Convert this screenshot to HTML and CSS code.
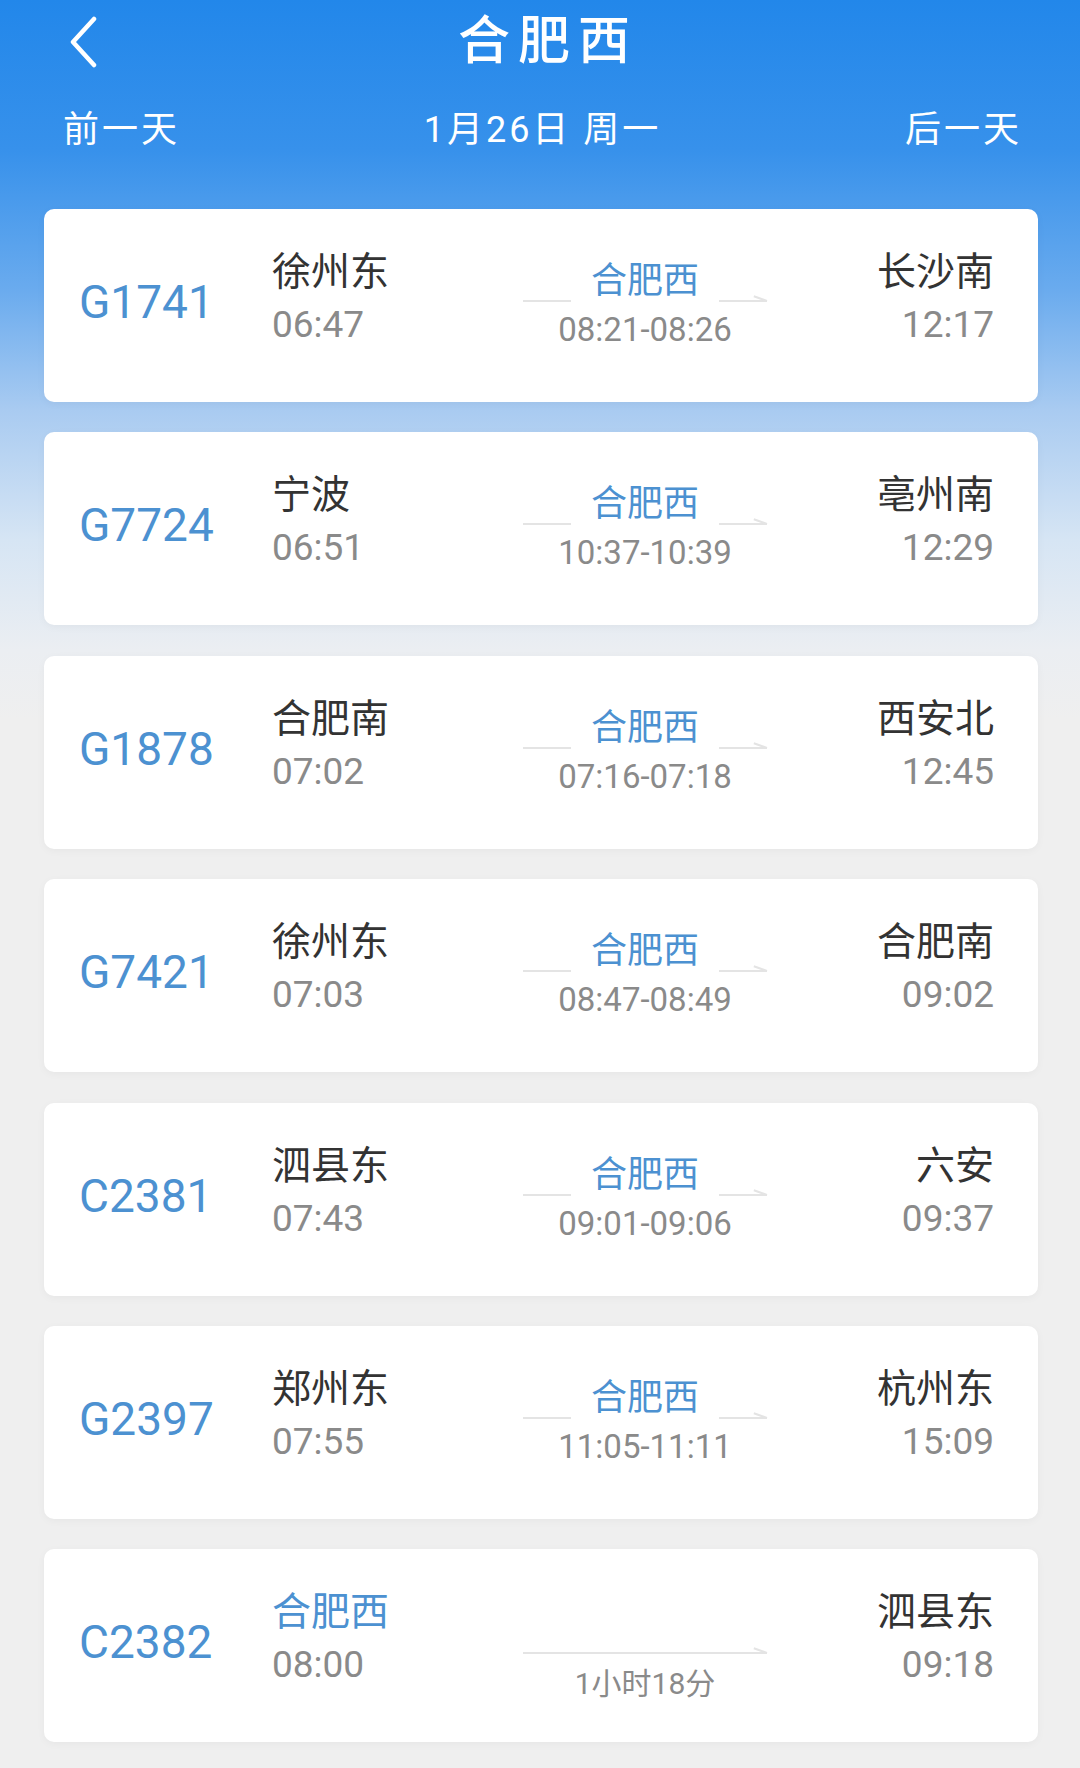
FILE: index.html
```html
<!DOCTYPE html>
<html lang="zh-CN">
  <head>
    <meta charset="UTF-8" />
    <meta name="viewport" content="width=device-width, initial-scale=1.0" />
    <title>合肥西</title>
    <link rel="stylesheet" href="styles.css">
  </head>
  <body>
    <header class="header">
      <div class="topbar">
        <a class="back" href="#">
          <svg viewBox="0 0 30 52" width="30" height="52">
            <path d="M26 3 L5 26 L26 49" fill="none" stroke="#fff" stroke-width="4.5" stroke-linecap="round" stroke-linejoin="round" />
          </svg>
        </a>
        <h1 class="title">合肥西</h1>
        <span></span>
      </div>
      <div class="daybar">
        <a href="#" class="day-link">前一天</a>
        <span class="day-current">1月26日 周一</span>
        <a href="#" class="day-link">后一天</a>
      </div>
    </header>

    <main class="list">
      <div class="card">
        <div class="train-no">G1741</div>
        <div class="stop">
          <span class="stop-name">徐州东</span>
          <span class="stop-time">06:47</span>
        </div>
        <div class="via">
          <div class="via-top">
            <span class="line"></span>
            <span class="via-name">合肥西</span>
            <span class="line arrow"></span>
          </div>
          <span class="via-time">08:21-08:26</span>
        </div>
        <div class="stop end">
          <span class="stop-name">长沙南</span>
          <span class="stop-time">12:17</span>
        </div>
      </div>

      <div class="card">
        <div class="train-no">G7724</div>
        <div class="stop">
          <span class="stop-name">宁波</span>
          <span class="stop-time">06:51</span>
        </div>
        <div class="via">
          <div class="via-top">
            <span class="line"></span>
            <span class="via-name">合肥西</span>
            <span class="line arrow"></span>
          </div>
          <span class="via-time">10:37-10:39</span>
        </div>
        <div class="stop end">
          <span class="stop-name">亳州南</span>
          <span class="stop-time">12:29</span>
        </div>
      </div>

      <div class="card">
        <div class="train-no">G1878</div>
        <div class="stop">
          <span class="stop-name">合肥南</span>
          <span class="stop-time">07:02</span>
        </div>
        <div class="via">
          <div class="via-top">
            <span class="line"></span>
            <span class="via-name">合肥西</span>
            <span class="line arrow"></span>
          </div>
          <span class="via-time">07:16-07:18</span>
        </div>
        <div class="stop end">
          <span class="stop-name">西安北</span>
          <span class="stop-time">12:45</span>
        </div>
      </div>

      <div class="card">
        <div class="train-no">G7421</div>
        <div class="stop">
          <span class="stop-name">徐州东</span>
          <span class="stop-time">07:03</span>
        </div>
        <div class="via">
          <div class="via-top">
            <span class="line"></span>
            <span class="via-name">合肥西</span>
            <span class="line arrow"></span>
          </div>
          <span class="via-time">08:47-08:49</span>
        </div>
        <div class="stop end">
          <span class="stop-name">合肥南</span>
          <span class="stop-time">09:02</span>
        </div>
      </div>

      <div class="card">
        <div class="train-no">C2381</div>
        <div class="stop">
          <span class="stop-name">泗县东</span>
          <span class="stop-time">07:43</span>
        </div>
        <div class="via">
          <div class="via-top">
            <span class="line"></span>
            <span class="via-name">合肥西</span>
            <span class="line arrow"></span>
          </div>
          <span class="via-time">09:01-09:06</span>
        </div>
        <div class="stop end">
          <span class="stop-name">六安</span>
          <span class="stop-time">09:37</span>
        </div>
      </div>

      <div class="card">
        <div class="train-no">G2397</div>
        <div class="stop">
          <span class="stop-name">郑州东</span>
          <span class="stop-time">07:55</span>
        </div>
        <div class="via">
          <div class="via-top">
            <span class="line"></span>
            <span class="via-name">合肥西</span>
            <span class="line arrow"></span>
          </div>
          <span class="via-time">11:05-11:11</span>
        </div>
        <div class="stop end">
          <span class="stop-name">杭州东</span>
          <span class="stop-time">15:09</span>
        </div>
      </div>

      <div class="card">
        <div class="train-no">C2382</div>
        <div class="stop">
          <span class="stop-name current">合肥西</span>
          <span class="stop-time">08:00</span>
        </div>
        <div class="via direct">
          <span class="line arrow"></span>
          <span class="duration">1小时18分</span>
        </div>
        <div class="stop end">
          <span class="stop-name">泗县东</span>
          <span class="stop-time">09:18</span>
        </div>
      </div>
    </main>
  </body>
</html>
```

FILE: styles.css
```css
body {
  margin: 0;
  min-height: 1768px;
  font-family: Roboto, "Noto Sans CJK SC", sans-serif;
  background: linear-gradient(
      180deg,
      #2287ea 0,
      #3791eb 150px,
      #6aabee 290px,
      #a9cbf1 410px,
      #d6e5f4 540px,
      #ebeef2 650px,
      #efefef 720px
    )
    no-repeat;
  background-size: 100% 720px;
  background-color: #efefef;
}

a {
  color: inherit;
  text-decoration: none;
}

.topbar {
  display: grid;
  grid-template-columns: 1fr auto 1fr;
  align-items: center;
  height: 78px;
  padding: 0 60px 0 68px;
}

.back {
  display: flex;
  width: 30px;
  margin-top: 6px;
}

.title {
  margin: -5px 0 0;
  padding-left: 8px;
  font-size: 52px;
  font-weight: 500;
  letter-spacing: 8px;
  color: #fff;
}

.daybar {
  display: flex;
  justify-content: space-between;
  align-items: center;
  height: 96px;
  padding: 0 58px 0 63px;
  font-size: 36px;
  letter-spacing: 3px;
  color: #fff;
}

.list {
  display: flex;
  flex-direction: column;
  gap: 30.4px;
  padding: 35px 42px 0 44px;
}

.card {
  display: grid;
  grid-template-columns: 193px 251px 244px 1fr;
  align-items: start;
  height: 193px;
  padding: 0 44px 0 35px;
  background-color: #fff;
  border-radius: 10px;
  box-shadow: 0 2px 8px rgba(0, 0, 0, 0.04);
}

.train-no {
  margin-top: 70px;
  font-size: 46px;
  line-height: 1;
  color: #4c91d1;
}

.stop {
  display: flex;
  flex-direction: column;
  gap: 13px;
  padding-top: 43px;
}

.stop.end {
  align-items: flex-end;
}

.stop-name {
  font-size: 39px;
  line-height: 40px;
  color: #333;
}

.stop-name.current {
  color: #4c91d1;
}

.stop-time {
  font-size: 37px;
  line-height: 40px;
  color: #8a8a8a;
}

.via {
  display: flex;
  flex-direction: column;
  align-items: center;
  padding-top: 54px;
}

.via-top {
  display: flex;
  align-items: flex-end;
  width: 100%;
}

.via-name {
  padding: 0 20px;
  font-size: 36px;
  line-height: 36px;
  color: #4c91d1;
}

.line {
  flex: 1;
  height: 2px;
  margin-bottom: -3px;
  background-color: #e4e4e4;
}

/* small half arrow at the end of the line */
.arrow {
  position: relative;
}

.arrow::after {
  content: "";
  position: absolute;
  right: 0;
  top: 0;
  width: 14px;
  height: 2px;
  background-color: #e4e4e4;
  transform: rotate(20deg);
  transform-origin: right center;
}

.via-time {
  margin-top: 13px;
  font-size: 33px;
  line-height: 36px;
  color: #8a8a8a;
}

.via.direct {
  padding-top: 103px;
}

.via.direct .line {
  flex: none;
  width: 100%;
  margin: 0;
}

.duration {
  margin-top: 13px;
  font-size: 30px;
  line-height: 34px;
  color: #8a8a8a;
}
```
